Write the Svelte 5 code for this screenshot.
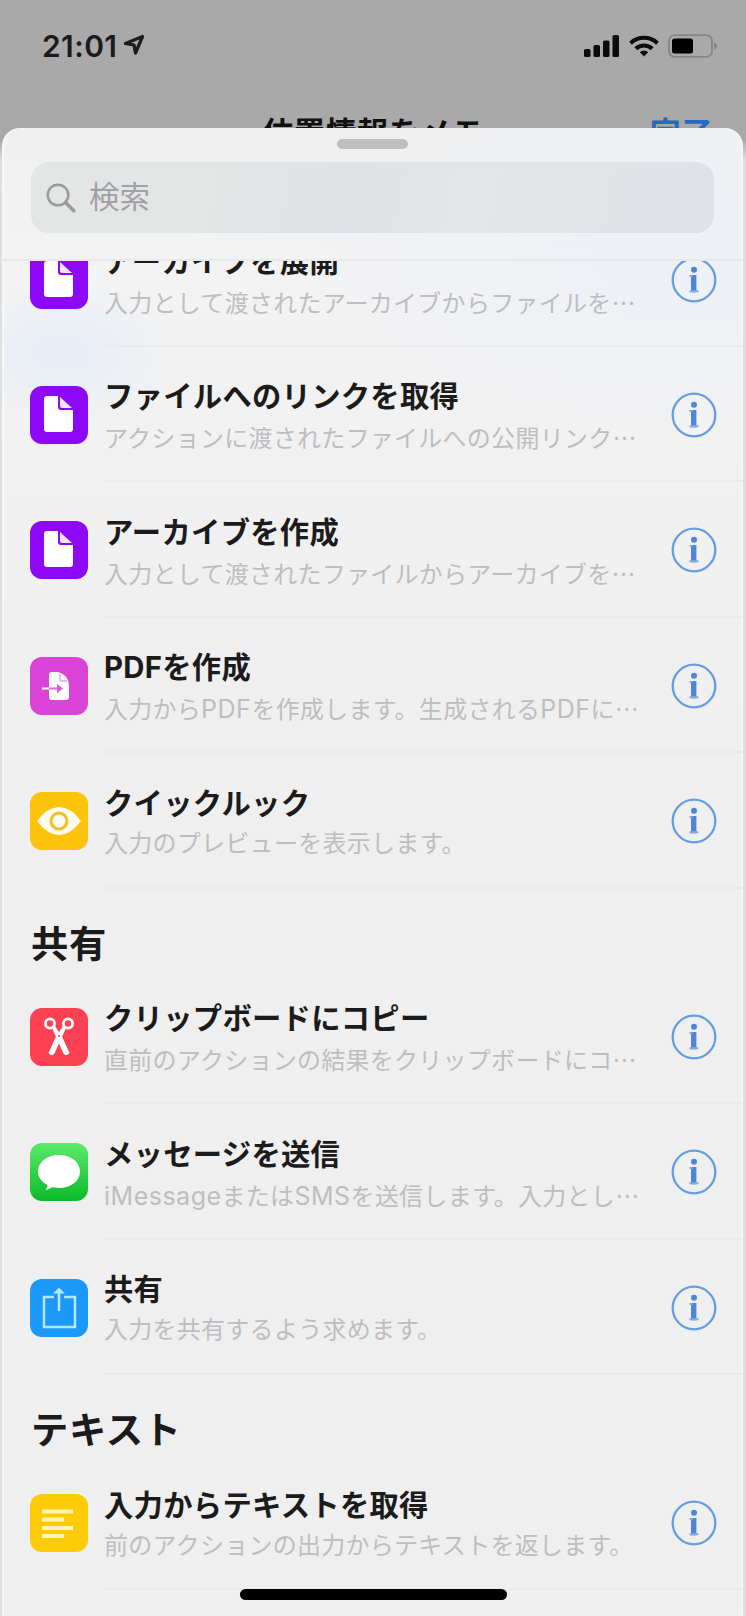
<script>
  const sections = [
    {
      title: '',
      rows: [
        { icon: 'file', title: 'アーカイブを展開', text: '入力として渡されたアーカイブからファイルを', more: true },
        { icon: 'file', title: 'ファイルへのリンクを取得', text: 'アクションに渡されたファイルへの公開リンク', more: true },
        { icon: 'file', title: 'アーカイブを作成', text: '入力として渡されたファイルからアーカイブを', more: true },
        { icon: 'pdf', title: 'PDFを作成', text: '入力からPDFを作成します。生成されるPDFに', more: true },
        { icon: 'eye', title: 'クイックルック', text: '入力のプレビューを表示します。' }
      ]
    },
    {
      title: '共有',
      rows: [
        { icon: 'scissors', title: 'クリップボードにコピー', text: '直前のアクションの結果をクリップボードにコ', more: true },
        { icon: 'message', title: 'メッセージを送信', text: 'iMessageまたはSMSを送信します。入力とし', more: true },
        { icon: 'share', title: '共有', text: '入力を共有するよう求めます。' }
      ]
    },
    {
      title: 'テキスト',
      rows: [
        { icon: 'text', title: '入力からテキストを取得', text: '前のアクションの出力からテキストを返します。' }
      ]
    }
  ];

  // Separates Latin words from Japanese so each can be tracked on its own.
  const runs = (text) => text.split(/([A-Za-z]+)/).filter(Boolean);
</script>

<div class="screen" lang="ja">
  <header class="status">
    <div class="clock">
      <span class="time">21:01</span>
      <svg class="loc" width="22" height="22" viewBox="0 0 22 22"><path d="M19.500 2.500 2.500 9.500 11 11 12.500 19Z" fill="none" stroke="#1c1c1c" stroke-width="3.300" stroke-linejoin="round" /></svg>
    </div>
    <div class="indicators">
      <svg width="36" height="22" viewBox="0 0 36 22" fill="#0c0c0c">
        <rect x="0" y="14" width="6.500" height="8" rx="1.500" /><rect x="9.500" y="10" width="6.500" height="12" rx="1.500" /><rect x="19" y="5.500" width="6.500" height="16.500" rx="1.500" /><rect x="28.500" y="0" width="6.500" height="22" rx="1.500" />
      </svg>
      <svg width="30" height="22" viewBox="0 0 30 22" fill="none" stroke="#0c0c0c" stroke-width="4">
        <path d="M1.500 8.300a19.500 19.500 0 0 1 27 0" /><path d="M6.800 13.800a12 12 0 0 1 16.400 0" /><path d="M15 21.500 10.800 17.200a6 6 0 0 1 8.400 0Z" fill="#0c0c0c" stroke="none" />
      </svg>
      <svg width="50" height="24" viewBox="0 0 50 24">
        <rect x="1" y="1.200" width="43" height="21.600" rx="5.500" fill="none" stroke="#858585" stroke-width="1.800" />
        <rect x="4" y="4.500" width="21" height="15" rx="2.500" fill="#000" /><path d="M46 8.500c4 1 4 6 0 7z" fill="#858585" />
      </svg>
    </div>
  </header>
  <nav class="nav"><span></span><b>位置情報をメモ</b><span class="done">完了</span></nav>

  <main class="sheet">
    <div class="top">
      <div class="grabber"></div>
      <div class="search">
        <svg width="30" height="30" viewBox="0 0 30 30" fill="none" stroke="#9b9b9f"><circle cx="12" cy="12" r="10.300" stroke-width="2.500" /><path d="m19.500 19.500 8.300 8.300" stroke-width="3.600" stroke-linecap="round" /></svg>
        <span>検索</span>
      </div>
    </div>
    <div class="list">
      {#each sections as section}
        <section>
          {#if section.title}<h2>{section.title}</h2>{/if}
          {#each section.rows as row}
            <article>
              <div class="tile {row.icon}">
                <svg width="58" height="58" viewBox="0 0 58 58">
                  {#if row.icon === 'file'}
                    <path d="M17 10h11v11q0 3 3 3h12v19q0 3-3 3H17q-3 0-3-3V13q0-3 3-3Z" fill="#fff" /><path d="M30 11 42 22H32q-2 0-2-2Z" fill="#f2e3ff" />
                  {:else if row.icon === 'pdf'}
                    <path d="M22 15h6q11 3 11 14v11q0 3-3 3H22q-3 0-3-3V18q0-3 3-3Z" fill="#fff" /><path d="M30 17v5q0 2 2 2h5" fill="none" stroke="#eb9ce8" stroke-width="1.300" /><path d="M12 31.500h7" stroke="#fff" stroke-width="2" /><path d="M19 31.500h10" stroke="#e266df" stroke-width="2" /><path d="m27 27 6 4.500-6 4.500Z" fill="#d65bd3" />
                  {:else if row.icon === 'eye'}
                    <path d="M7 29q10.500-14 22-14t22 14q-10.500 14-22 14T7 29Z" fill="#fffdf0" /><circle cx="29" cy="29" r="8" fill="none" stroke="#f3be2b" stroke-width="3" />
                  {:else if row.icon === 'scissors'}
                    <g fill="none" stroke="#fff" stroke-width="2.800"><circle cx="20" cy="15.500" r="4.600" /><circle cx="38" cy="15.500" r="4.600" /></g>
                    <path d="m22 20 3-2 7.500 11.500L39.500 45q-3 4-6 .5L27 31Z" fill="#fff" /><path d="m36 20-3-2-7.500 11.500L18.500 45q3 4 6 .5L31 31Z" fill="#fff" /><circle cx="29" cy="28" r="1" fill="#fb4152" />
                  {:else if row.icon === 'message'}
                    <path d="M29 12c12 0 21 7 21 16.500S41 45 29 45c-2.500 0-5-.3-7-.9-1.800 1.500-3.500 2.500-6.500 2.900 1.400-1.600 2-3 1.900-5C11.500 39 8 34 8 28.500 8 19 17 12 29 12Z" fill="#fff" />
                  {:else if row.icon === 'share'}
                    <g fill="none" stroke="#b5e6ff" stroke-width="2.500"><path d="M24 18H14v30h31V18H34" /><path d="M29 12v20" /></g><path d="m23 14.500 6-6 6 6Z" fill="#b5e6ff" />
                  {:else}
                    <path d="M12 17.500h31M12 25.500h22M12 34h31M12 42h22" stroke="#fff5b5" stroke-width="3.800" />
                  {/if}
                </svg>
              </div>
              <div class="body">
                <div class="copy">
                  <h3>{row.title}</h3>
                  <p>{#each runs(row.text) as run}{#if /^[A-Za-z]/.test(run)}<span class="latin">{run}</span>{:else}{run}{/if}{/each}{#if row.more}<span class="more">…</span>{/if}</p>
                </div>
                <svg class="info" width="46" height="46" viewBox="0 0 46 46"><circle cx="23" cy="23" r="21.300" fill="none" stroke="#659de5" stroke-width="2.300" /><circle cx="23" cy="12.700" r="3" fill="#4c86d4" /><path d="M20 18h5.400v17.300h-5.400Z" fill="#4c86d4" /><path d="M18.500 18h3v2h-3ZM18.500 33.300h9v2h-9Z" fill="#81abe2" /></svg>
              </div>
            </article>
          {/each}
        </section>
      {/each}
    </div>
    <div class="home"></div>
  </main>
</div>

<style>
  :global(body) { margin: 0; background: #a9a9a9; }
  .screen {
    width: 746px; height: 1616px; box-sizing: border-box; padding: 0 3px 0 2px; overflow: hidden;
    display: flex; flex-direction: column; background: linear-gradient(#a9a9a9 0 140px, #dcdedf 160px);
    font-family: Inter, "Noto Sans CJK JP", sans-serif; color: #1b1b1c;
  }
  .status { height: 92px; flex: none; display: flex; justify-content: space-between; align-items: center; padding: 0 25px 0 40px; }
  .clock, .indicators { display: flex; align-items: center; }
  .clock { gap: 6px; }
  .time { font-size: 30px; font-weight: 600; letter-spacing: .4px; line-height: 40px; }
  .loc { margin-bottom: 2px; }
  .indicators { gap: 9px; }
  .nav { height: 36px; flex: none; overflow: hidden; display: grid; grid-template-columns: 1fr auto 1fr; padding: 21px 30px 0 31px; box-sizing: border-box; font-size: 31px; letter-spacing: .6px; line-height: 40px; color: #111; }
  .done { justify-self: end; font-weight: 700; color: #2869bd; }
  .sheet { position: relative; flex: 1; min-height: 0; display: flex; flex-direction: column; border-radius: 18px 18px 0 0; overflow: hidden;
    background: radial-gradient(ellipse 120px 75px at 60px 225px, #e6edf7, transparent), radial-gradient(ellipse 420px 190px at 690px 130px, #edf0f7, transparent), linear-gradient(#f0f0f0, #f3f3f3 130px, #f1f1f1 330px, #efefef 600px);
    box-shadow: inset 2px 0 1px #f7f7f7, inset -2px 0 1px #f7f7f7; }
  .top { height: 133px; flex: none; box-sizing: border-box; padding: 11px 29px 0 29px; border-bottom: 2px solid #e7e8ea; }
  .grabber { width: 71px; height: 10px; border-radius: 5px; background: #bebebe; margin: 0 auto 13px; }
  .search { height: 71px; border-radius: 18px; display: flex; align-items: center; gap: 13px; padding-left: 15px; background: linear-gradient(100deg, #e4e5e5 25%, #dfe1e6 47%, #e4e5e6 63%, #dfe1e8); color: #a0a0a5; font-size: 30.500px; line-height: 38px; }
  .search span { padding-bottom: 2px; }
  .list { flex: 1; min-height: 0; overflow: hidden; }
  section:first-child { margin-top: -49.500px; }
  h2 { margin: 0; height: 80px; box-sizing: border-box; padding: 32px 0 0 29px; font-size: 37.300px; letter-spacing: .6px; line-height: 48px; font-weight: 700; }
  article { height: 135.450px; display: flex; }
  .tile { width: 58px; height: 58px; margin: 39px 16px 0 28px; border-radius: 12px; flex: none; overflow: hidden; }
  .tile svg { display: block; }
  .file { background: #8d08f7; }
  .pdf { background: #d943d6; }
  .eye { background: #fdc30b; }
  .scissors { background: #fb4152; }
  .message { background: linear-gradient(#5ce96b, #0abb29); }
  .share { background: #1b98f8; }
  .text { background: #fecb08; }
  .body { flex: 1; min-width: 0; display: flex; justify-content: space-between; border-bottom: 2px solid #eaebec; }
  .copy { padding-top: 30.500px; white-space: nowrap; }
  h3 { margin: 0; font-size: 29.300px; letter-spacing: .3px; line-height: 40px; font-weight: 700; }
  p { margin: 0; font-size: 24px; letter-spacing: .27px; line-height: 40px; color: #bebec0; }
  .latin { font-size: 25px; letter-spacing: .5px; }
  .more { font-family: "Noto Sans CJK JP", sans-serif; }
  .info { margin: 45px 26px 0 0; flex: none; }
  .home { position: absolute; left: 238px; bottom: 16px; width: 267px; height: 11px; border-radius: 6px; background: #000; }
</style>
